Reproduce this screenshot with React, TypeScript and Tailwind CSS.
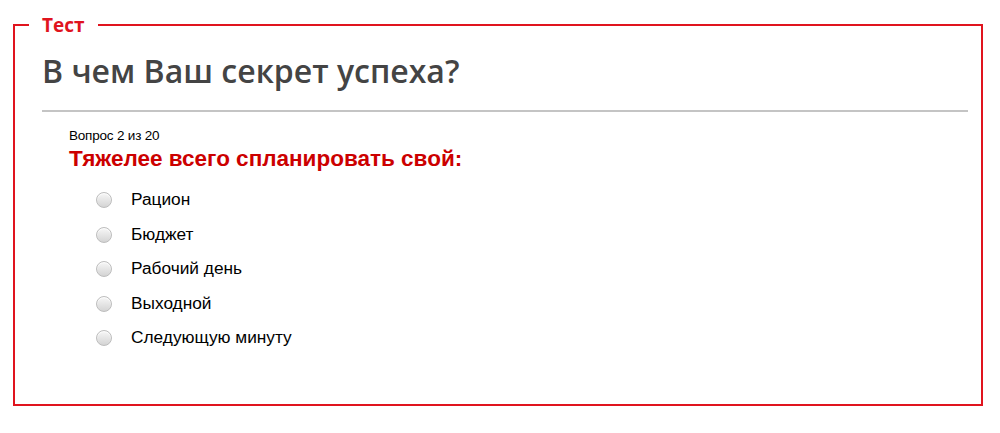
const options = ['Рацион', 'Бюджет', 'Рабочий день', 'Выходной', 'Следующую минуту'];

const Radio = () => (
  <span className="block w-[16px] h-[16px] rounded-full border border-[#bdbdbd] bg-gradient-to-b from-[#f7f7f7] to-[#d4d4d4] shadow-[inset_0_1px_1px_rgba(255,255,255,0.9)]" />
);

export default function App() {
  return (
    <div className="w-[1000px] h-[433px] bg-white pt-[14px]">
      <fieldset className="ml-[13px] w-[970px] h-[392px] border-2 border-[#e0141e] pl-[27px] pr-[13px]">
        <legend className="ml-[-13px] px-[13px] text-[19px] leading-[22px] font-bold text-[#e0141e] font-['Open_Sans',sans-serif]">
          Тест
        </legend>
        <h1 className="mt-[16px] text-[32px] leading-[38px] font-semibold text-[#444] font-['Open_Sans',sans-serif]">
          В чем Ваш секрет успеха?
        </h1>
        <div className="mt-[20px] h-[2px] bg-[#c4c4c4]" />
        <div className="pl-[27px] pt-[16px]">
          <div className="text-[13.5px] leading-[16px] text-black font-['Liberation_Sans',Arial,sans-serif] tracking-[-0.2px]">
            Вопрос 2 из 20
          </div>
          <div className="mt-[1px] text-[22.5px] leading-[28px] font-bold text-[#cc0000] font-['Liberation_Sans',Arial,sans-serif]">
            Тяжелее всего спланировать свой:
          </div>
          <ul className="mt-[10px] pl-[27px] flex flex-col">
            {options.map((o) => (
              <li key={o} className="flex items-center h-[34.5px]">
                <Radio />
                <span className="ml-[19px] text-[17.3px] text-black font-['Liberation_Sans',Arial,sans-serif]">
                  {o}
                </span>
              </li>
            ))}
          </ul>
        </div>
      </fieldset>
    </div>
  );
}
